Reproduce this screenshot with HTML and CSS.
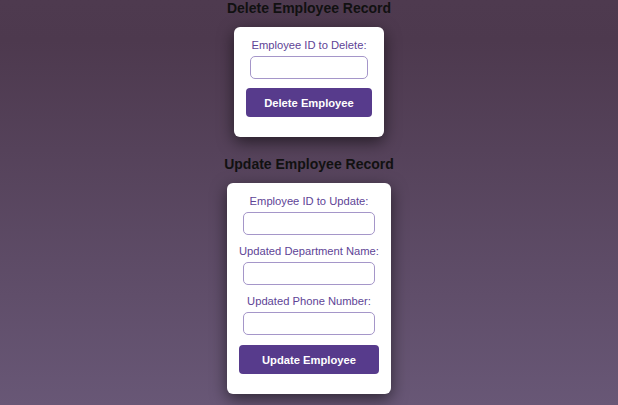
FILE: index.html
```html
<!DOCTYPE html>
<html lang="en">
<head>
<meta charset="utf-8">
<title>Employee Records</title>
<link rel="stylesheet" href="styles.css">
</head>
<body>
<main class="page">
  <section class="block">
    <h2 class="title title-first">Delete Employee Record</h2>
    <form class="card card-delete">
      <label class="label" for="delId">Employee ID to Delete:</label>
      <input class="field" id="delId" type="text">
      <button class="btn" type="button">Delete Employee</button>
    </form>
  </section>
  <section class="block">
    <h2 class="title">Update Employee Record</h2>
    <form class="card card-update">
      <label class="label" for="upId">Employee ID to Update:</label>
      <input class="field" id="upId" type="text">
      <label class="label" for="upDept">Updated Department Name:</label>
      <input class="field" id="upDept" type="text">
      <label class="label" for="upPhone">Updated Phone Number:</label>
      <input class="field" id="upPhone" type="text">
      <button class="btn" type="button">Update Employee</button>
    </form>
  </section>
</main>
</body>
</html>
```

FILE: styles.css
```css
html, body {
  margin: 0;
  padding: 0;
}

body {
  min-height: 100vh;
  background: linear-gradient(to bottom, #4e3a4f 0%, #4d394e 10%, #685776 100%);
  font-family: "Liberation Sans", Arial, sans-serif;
}

.page {
  display: flex;
  flex-direction: column;
  align-items: center;
}

.block {
  display: flex;
  flex-direction: column;
  align-items: center;
}

.title {
  margin: 19px 0 11px;
  font-size: 14px;
  font-weight: bold;
  line-height: 16px;
  color: #111;
}

.title-first {
  margin-top: 0;
}

.card {
  box-sizing: content-box;
  display: flex;
  flex-direction: column;
  align-items: center;
  padding: 12px 12px 20px;
  background: #fff;
  border-radius: 6px;
  box-shadow: 0 5px 16px rgba(0, 0, 0, 0.55);
  margin: 0;
}

.card-delete {
  width: 126px;
}

.card-update {
  width: 140px;
}

.label {
  display: block;
  font-size: 11.2px;
  line-height: 13px;
  color: #5e4496;
  margin-bottom: 4px;
  white-space: nowrap;
}

.field {
  box-sizing: border-box;
  width: 94.4%;
  height: 23px;
  margin: 0 0 10px;
  padding: 2px 6px;
  border: 1px solid #a596c9;
  border-radius: 5px;
  background: #fff;
  font-family: inherit;
  font-size: 11px;
}

.card-delete .field {
  margin-bottom: 9px;
}

.btn {
  box-sizing: border-box;
  width: 100%;
  height: 29px;
  border: none;
  border-radius: 4px;
  background: #573b8c;
  color: #fff;
  font-family: inherit;
  font-size: 11.2px;
  font-weight: bold;
  cursor: pointer;
}
```
